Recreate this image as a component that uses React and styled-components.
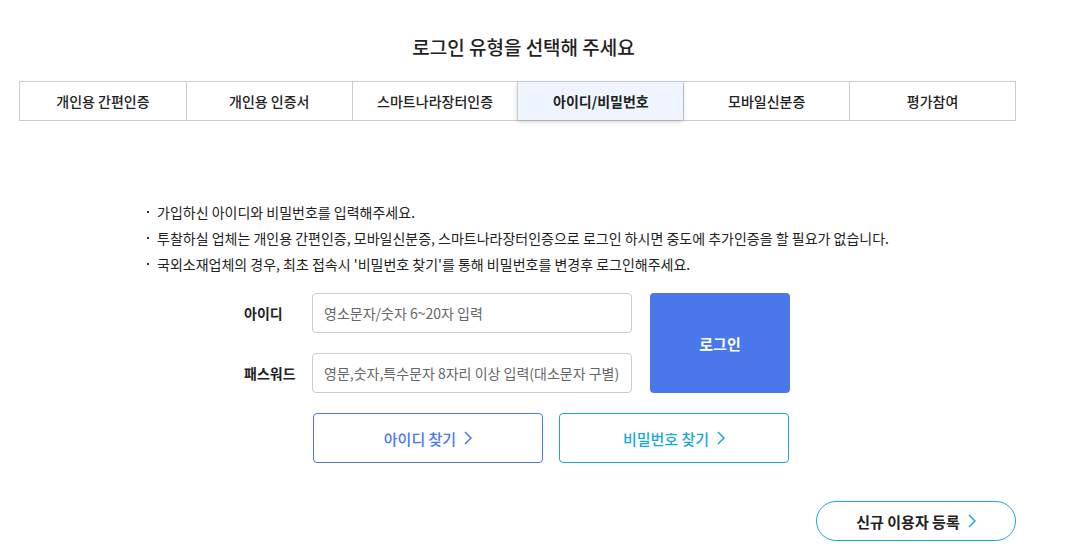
import React from "react";
import styled, { createGlobalStyle } from "styled-components";

const Global = createGlobalStyle`
  html, body { margin: 0; padding: 0; background: #fff; }
  body { font-family: "Noto Sans CJK KR", "Noto Sans", sans-serif; color: #222; }
  * { box-sizing: border-box; }
`;

const Wrapper = styled.div`
  width: 997px;
  margin-left: 19px;
  padding-top: 35px;
  padding-bottom: 11px;
`;

const Title = styled.h2`
  margin: 0 0 22px;
  padding-left: 12px;
  font-size: 19px;
  line-height: 24px;
  font-weight: 500;
  text-align: center;
  color: #222;
`;

const Tabs = styled.div`
  display: grid;
  grid-template-columns: repeat(6, 1fr);
  border: 1px solid #ccc;
  height: 40px;
`;

const Tab = styled.div`
  display: flex;
  align-items: center;
  justify-content: center;
  font-size: 14px;
  font-weight: ${(p) => (p.$active ? 700 : 500)};
  color: #222;
  border-left: ${(p) => (p.$first ? "none" : "1px solid #ccc")};
  background: ${(p) => (p.$active ? "#eef5ff" : "#fff")};
  box-shadow: ${(p) => (p.$active ? "0 2px 4px rgba(0,0,0,0.18)" : "none")};
  position: relative;
  z-index: ${(p) => (p.$active ? 1 : 0)};
`;

const Notice = styled.ul`
  list-style: none;
  margin: 78px 0 16px;
  padding: 0 0 0 128px;
`;

const NoticeItem = styled.li`
  position: relative;
  padding-left: 10px;
  font-size: 14px;
  line-height: 26px;
  color: #222;
  &::before {
    content: "";
    position: absolute;
    left: 0;
    top: 12px;
    width: 2px;
    height: 2px;
    background: #333;
  }
`;

const FormArea = styled.div`
  display: flex;
  gap: 18px;
  padding-left: 225px;
`;

const Fields = styled.div`
  display: flex;
  flex-direction: column;
  gap: 20px;
`;

const FieldRow = styled.div`
  display: flex;
  align-items: center;
`;

const Label = styled.label`
  width: 68px;
  font-size: 14px;
  font-weight: 700;
  color: #222;
`;

const Input = styled.input`
  width: 320px;
  height: 40px;
  border: 1px solid #ccc;
  border-radius: 4px;
  padding: 0 11px;
  font-family: inherit;
  font-size: 14px;
  color: #222;
  &::placeholder { color: #666; }
`;

const LoginButton = styled.button`
  width: 140px;
  height: 100px;
  border: none;
  border-radius: 4px;
  background: #4a78ec;
  color: #fff;
  font-family: inherit;
  font-size: 15px;
  font-weight: 700;
`;

const FindRow = styled.div`
  display: flex;
  gap: 16px;
  margin-top: 20px;
  padding-left: 294px;
`;

const OutlineButton = styled.button`
  width: 230px;
  height: 50px;
  background: #fff;
  border: 1px solid ${(p) => p.$color};
  border-radius: 4px;
  color: ${(p) => p.$color};
  font-family: inherit;
  font-size: 15px;
  font-weight: 500;
  display: flex;
  align-items: center;
  justify-content: center;
  gap: 8px;
`;

const RegisterRow = styled.div`
  display: flex;
  justify-content: flex-end;
  margin-top: 38px;
`;

const RegisterButton = styled.button`
  width: 200px;
  height: 40px;
  background: #fff;
  border: 1px solid #1aa8d8;
  border-radius: 20px;
  color: #222;
  font-family: inherit;
  font-size: 15px;
  font-weight: 700;
  display: flex;
  align-items: center;
  justify-content: center;
  gap: 8px;
`;

const Chevron = ({ color }) => (
  <svg width="8" height="14" viewBox="0 0 8 14" fill="none">
    <polyline points="1,1 7,7 1,13" stroke={color} strokeWidth="1.5" />
  </svg>
);

const tabs = ["개인용 간편인증", "개인용 인증서", "스마트나라장터인증", "아이디/비밀번호", "모바일신분증", "평가참여"];

const notices = [
  "가입하신 아이디와 비밀번호를 입력해주세요.",
  "투찰하실 업체는 개인용 간편인증, 모바일신분증, 스마트나라장터인증으로 로그인 하시면 중도에 추가인증을 할 필요가 없습니다.",
  "국외소재업체의 경우, 최초 접속시 '비밀번호 찾기'를 통해 비밀번호를 변경후 로그인해주세요.",
];

export default function App() {
  return (
    <>
      <Global />
      <Wrapper>
        <Title>로그인 유형을 선택해 주세요</Title>
        <Tabs>
          {tabs.map((t, i) => (
            <Tab key={t} $first={i === 0} $active={i === 3}>
              {t}
            </Tab>
          ))}
        </Tabs>
        <Notice>
          {notices.map((n) => (
            <NoticeItem key={n}>{n}</NoticeItem>
          ))}
        </Notice>
        <FormArea>
          <Fields>
            <FieldRow>
              <Label>아이디</Label>
              <Input placeholder="영소문자/숫자 6~20자 입력" />
            </FieldRow>
            <FieldRow>
              <Label>패스워드</Label>
              <Input type="password" placeholder="영문,숫자,특수문자 8자리 이상 입력(대소문자 구별)" />
            </FieldRow>
          </Fields>
          <LoginButton>로그인</LoginButton>
        </FormArea>
        <FindRow>
          <OutlineButton $color="#4a78ec">
            아이디 찾기 <Chevron color="#4a78ec" />
          </OutlineButton>
          <OutlineButton $color="#1aa8d8">
            비밀번호 찾기 <Chevron color="#1aa8d8" />
          </OutlineButton>
        </FindRow>
        <RegisterRow>
          <RegisterButton>
            신규 이용자 등록 <Chevron color="#1aa8d8" />
          </RegisterButton>
        </RegisterRow>
      </Wrapper>
    </>
  );
}
